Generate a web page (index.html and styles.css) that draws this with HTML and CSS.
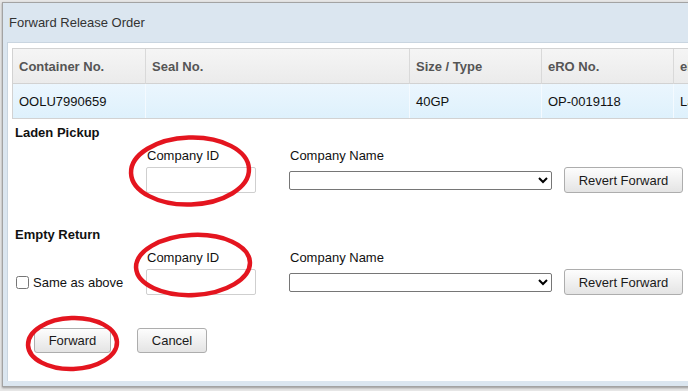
FILE: index.html
```html
<!DOCTYPE html>
<html>
<head>
<meta charset="utf-8">
<link rel="stylesheet" href="styles.css">
</head>
<body>
<div class="page">
  <div class="page-title">All Release Orders</div>
</div>
<div class="dialog">
  <div class="dialog-title">Forward Release Order</div>
  <div class="dialog-body">
    <table class="grid">
      <colgroup>
        <col class="c1"><col class="c2"><col class="c3"><col class="c4"><col class="c5">
      </colgroup>
      <thead>
        <tr><th>Container No.</th><th>Seal No.</th><th>Size / Type</th><th>eRO No.</th><th>eRO Status</th></tr>
      </thead>
      <tbody>
        <tr><td>OOLU7990659</td><td></td><td>40GP</td><td>OP-0019118</td><td>Laden</td></tr>
      </tbody>
    </table>

    <section class="fwd-section">
      <div class="sec-title">Laden Pickup</div>
      <div class="fields">
        <div class="lead"></div>
        <div class="field-label">Company ID</div>
        <div class="field-label">Company Name</div>
        <div></div>
        <div class="lead"></div>
        <input class="id-input" type="text">
        <select class="name-select"><option></option></select>
        <button class="btn btn-revert">Revert Forward</button>
      </div>
    </section>

    <section class="fwd-section second">
      <div class="sec-title">Empty Return</div>
      <div class="fields">
        <div class="lead"></div>
        <div class="field-label">Company ID</div>
        <div class="field-label">Company Name</div>
        <div></div>
        <label class="lead same"><input type="checkbox" class="chk">Same as above</label>
        <input class="id-input" type="text">
        <select class="name-select"><option></option></select>
        <button class="btn btn-revert">Revert Forward</button>
      </div>
    </section>

    <div class="actions">
      <button class="btn btn-fwd">Forward</button>
      <button class="btn btn-cancel">Cancel</button>
    </div>
  </div>
</div>
<svg class="marks" width="688" height="391" viewBox="0 0 688 391">
  <ellipse cx="190" cy="171" rx="59" ry="33.5" transform="rotate(-2 190 171)"/>
  <ellipse cx="193" cy="265" rx="57" ry="30" transform="rotate(-3 193 265)"/>
  <ellipse cx="72.5" cy="343.5" rx="44.5" ry="25.5" transform="rotate(-2 72.5 343.5)"/>
</svg>
</body>
</html>
```

FILE: styles.css
```css
* { box-sizing: border-box; }

body {
  margin: 0;
  width: 688px;
  height: 391px;
  overflow: hidden;
  position: relative;
  background: #e6e6e6;
  font-family: "Liberation Sans", Arial, sans-serif;
  font-size: 13px;
  color: #111;
}

.page-title {
  margin-top: -16px;
  font-size: 20px;
  font-weight: bold;
  color: #666;
  line-height: 18px;
}

.dialog {
  position: absolute;
  left: 2px;
  top: 2px;
  width: 740px;
  border: 1px solid #a3a3a3;
  background: #dbe6f0;
  padding: 0 0 5px 4px;
  box-shadow: 0 1px 2px rgba(0, 0, 0, 0.35);
}

.dialog-title {
  height: 39px;
  line-height: 39px;
  padding-left: 2px;
  font-size: 13px;
  color: #333;
}

.dialog-body {
  background: #fff;
  border-top: 1px solid #c9d5e0;
  border-left: 1px solid #c9d5e0;
  height: 339px;
  padding: 5px 0 0 4px;
}

.grid {
  border-collapse: separate;
  border-spacing: 0;
  table-layout: fixed;
  width: 811px;
  border: 1px solid #d2d2d2;
}

.c1 { width: 133px; }
.c2 { width: 264px; }
.c3 { width: 132px; }
.c4 { width: 132px; }
.c5 { width: 150px; }

.grid th {
  height: 35px;
  text-align: left;
  padding: 0 6px;
  font-weight: bold;
  color: #555;
  background: linear-gradient(#f5f5f5, #ebebeb);
  border-right: 1px solid #d9d9d9;
  border-bottom: 1px solid #d2d2d2;
}

.grid td {
  height: 34px;
  padding: 0 6px;
  color: #111;
  background: linear-gradient(#ebf6fe, #def1fc);
  border-right: 1px solid #f4faff;
}

.fwd-section {
  padding-left: 3px;
  margin-top: 6px;
}

.fwd-section.second {
  margin-top: 34px;
}

.sec-title {
  font-weight: bold;
  line-height: 15px;
  color: #111;
}

.fields {
  display: grid;
  grid-template-columns: 131px 143px 275px auto;
  row-gap: 4px;
  align-items: center;
  margin-top: 8px;
}

.field-label {
  line-height: 15px;
  padding-left: 1px;
  color: #111;
}

.id-input {
  width: 110px;
  height: 26px;
  border: 1px solid #cfcfcf;
  border-radius: 2px;
  margin: 0;
  font: inherit;
}

.name-select {
  width: 263px;
  height: 19px;
  margin: 0;
  font: inherit;
  font-size: 13px;
  border: 1px solid #767676;
  border-radius: 2px;
  background: #fff;
  color: #000;
}

.btn {
  height: 26px;
  margin: 0;
  padding: 0 13px;
  font-family: "Liberation Sans", Arial, sans-serif;
  font-size: 13px;
  color: #1a1a1a;
  background: linear-gradient(#fdfdfd, #e4e4e4);
  border: 1px solid #adadad;
  border-radius: 3px;
  justify-self: start;
}

.btn-revert { width: 119px; padding: 0; }

.same {
  display: flex;
  align-items: center;
  color: #111;
}

.chk {
  width: 13px;
  height: 13px;
  margin: 0 4px 0 1px;
}

.actions {
  display: flex;
  gap: 26px;
  padding-left: 22px;
  margin-top: 33px;
}

.btn-fwd { width: 77px; height: 25px; padding: 0; }
.btn-cancel { width: 70px; height: 25px; padding: 0; }

.marks {
  position: absolute;
  left: 0;
  top: 0;
  pointer-events: none;
}

.marks ellipse {
  fill: none;
  stroke: #e4151f;
  stroke-width: 4.5;
}
```
